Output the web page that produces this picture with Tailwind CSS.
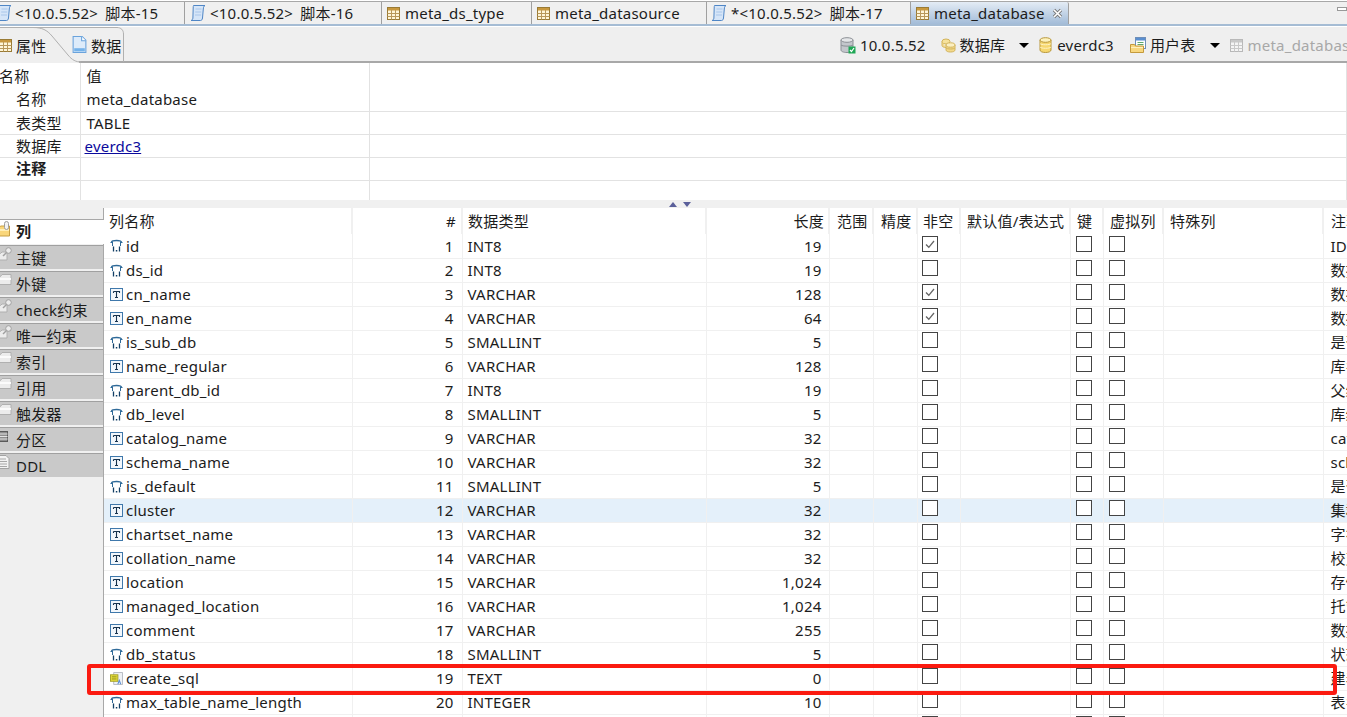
<!DOCTYPE html>
<html>
<head>
<meta charset="utf-8">
<script src="https://cdn.jsdelivr.net/npm/@tailwindcss/browser@4"></script>
</head>
<body class="m-0 w-[1347px] h-[717px] overflow-hidden bg-white text-[#1c1c1c] text-[15px] leading-[20px] tracking-[0.22px] font-['Noto_Sans','Noto_Sans_CJK_SC',sans-serif] relative">
<svg class="absolute w-0 h-0">
  <defs>
    <symbol id="script" viewBox="0 0 16 18"><path d="M3.500 1.500h11.500c-1.200.6-1.500 1.500-1.700 3.500L12.500 14c-.2 1.500-.8 2.500-2 2.500H1c1.200-.5 1.800-1.200 1.900-2.500L3.200 4C3.300 2.800 3.200 2 3.500 1.500z" fill="#d5e5f8" stroke="#4f86c6"/><path d="M5.500 5h6M5.200 8h6M5 11h6" stroke="#a9c6ea"/></symbol>
    <symbol id="tbl" viewBox="0 0 13 13"><rect x=".5" y=".5" width="12" height="12" fill="#fff6d8" stroke="#9a7b35"/><rect x="1" y="1" width="11" height="2.500" fill="#c9993e"/><path d="M.5 6.500h12M.5 9.500h12M4.500 3v9.500M8.500 3v9.500" stroke="#b9985a"/></symbol>
    <symbol id="tblgrey" viewBox="0 0 13 13"><rect x=".5" y=".5" width="12" height="12" fill="#f4f4f4" stroke="#b8b8b8"/><rect x="1" y="1" width="11" height="2.500" fill="#c8c8c8"/><path d="M.5 6.500h12M.5 9.500h12M4.500 3v9.500M8.500 3v9.500" stroke="#c8c8c8"/></symbol>
    <symbol id="num" viewBox="0 0 13 13"><path d="M1.500 3.500C1.500 2 3 1.500 6.500 1.500s5 .5 5 2" fill="none" stroke="#2f6a99" stroke-width="1.300"/><path d="M.5 3.500h2.500M10 3.500h2.500M2.500 3.500V7M10.500 3.500V7" stroke="#2f6a99"/><path d="M3.500 7.500v5M9.500 7.500v5" stroke="#123f66" stroke-width="1.300"/><rect x="5.800" y="11" width="1.500" height="1.500" fill="#123f66"/></symbol>
    <symbol id="txt" viewBox="0 0 13 13"><rect x=".5" y=".5" width="12" height="12" fill="#f2f7fc" stroke="#3f78ab"/><path d="M3.500 3.500h6v1.500M3.500 3.500V5M6.500 3.500v6M5 9.500h3" fill="none" stroke="#16324e" stroke-width="1.100"/></symbol>
    <symbol id="dbcheck" viewBox="0 0 16 17"><path d="M1 3v10c0 1.500 2.500 2.500 6 2.500s6-1 6-2.500V3z" fill="#c3c7cc" stroke="#8b8f95"/><ellipse cx="7" cy="3" rx="6" ry="2.300" fill="#e4e6e8" stroke="#8b8f95"/><path d="M1 8c1 1.500 11 1.500 12 0" fill="none" stroke="#8b8f95"/><rect x="8.500" y="9.500" width="7" height="7" fill="#1fa755"/><path d="M10 13l1.500 1.500 2.500-3.500" fill="none" stroke="#fff" stroke-width="1.200"/></symbol>
    <symbol id="dbs" viewBox="0 0 15 15"><ellipse cx="5" cy="3.500" rx="4" ry="2.500" fill="#f6e29c" stroke="#d3b45b"/><path d="M1 3.500v4c0 1.300 2 2 4 2" fill="#f3dc92" stroke="#d3b45b"/><path d="M5 7v5c0 1.300 2 2 4.500 2s4.500-.7 4.500-2V7z" fill="#f3d98a" stroke="#d3b45b"/><ellipse cx="9.500" cy="7" rx="4.500" ry="2.200" fill="#fbefc2" stroke="#d3b45b"/><path d="M5 10c1 1.300 8 1.300 9 0" fill="none" stroke="#d3b45b"/></symbol>
    <symbol id="db" viewBox="0 0 13 16"><path d="M1 3v10c0 1.500 2.300 2.500 5.500 2.500S12 14.500 12 13V3z" fill="#f6d76f" stroke="#b8973a"/><ellipse cx="6.500" cy="3" rx="5.500" ry="2.300" fill="#fdf2bd" stroke="#b8973a"/><path d="M1 6.500c1 1.700 10 1.700 11 0M1 10c1 1.700 10 1.700 11 0" fill="none" stroke="#fff3c4"/></symbol>
    <symbol id="usertbl" viewBox="0 0 16 16"><rect x="5.500" y=".5" width="10" height="11" fill="#fff" stroke="#6f8fb8"/><rect x="6" y="1" width="9" height="2.500" fill="#5a8fd0"/><path d="M7.500 5.500h6M7.500 7.500h6" stroke="#5fa86a"/><path d="M.5 7.500h4l1 1.500h8v6.500H.5z" fill="#f8d77e" stroke="#c49a3c"/><path d="M1 10.500h12" stroke="#fff0bd"/></symbol>
    <symbol id="doc" viewBox="0 0 14 16"><path d="M1 .5h8.500L13 4v11.500H1z" fill="#ddebfa" stroke="#6aa3dc"/><path d="M9 .5V4.500H13" fill="#fff" stroke="#6aa3dc"/><rect x="2" y="11.500" width="10" height="3" fill="#74b2ea"/></symbol>
    <symbol id="folder" viewBox="0 0 17 14"><path d="M.5 3.500h5l1.500-2h9v10H.5z" fill="#ececec" stroke="#b0b0b0"/><path d="M1 6h15" stroke="#fbfbfb" stroke-width="2"/></symbol>
    <symbol id="folderkey" viewBox="0 0 17 14"><path d="M.5 6.500h5l1.500-1.500h5v8H.5z" fill="#ececec" stroke="#b0b0b0"/><circle cx="13.500" cy="3.500" r="2.800" fill="#ececec" stroke="#a0a0a0"/><path d="M11.500 5.500L8 9" stroke="#a0a0a0" stroke-width="1.500"/></symbol>
    <symbol id="folderact" viewBox="0 0 17 16"><path d="M.5 6.500h5l1-1.500h9v10H.5z" fill="#f9d67a" stroke="#c79f43"/><path d="M1 9h14" stroke="#ffeeb5" stroke-width="2"/><rect x="10.500" y=".5" width="4" height="8" rx="2" fill="#f2f2f2" stroke="#9c9c9c"/></symbol>
    <symbol id="sqlcol" viewBox="0 0 14 14"><path d="M4 .5h9.500v13H4z" fill="#eef1f5" stroke="#b3b8c0"/><rect x=".5" y="3" width="8" height="7" fill="#e6df3a" stroke="#a4a02a"/><path d="M2 5.200h5M2 7.500h5" stroke="#8c8a1f"/><path d="M8.500 13l1.500-4 1.500 4" stroke="#5c8fd6" fill="none" stroke-width="1.200"/></symbol>
    <symbol id="partition" viewBox="0 0 17 14"><rect x=".5" y="2.500" width="12" height="10" fill="#8d8d8d" stroke="#5a5a5a"/><path d="M.5 5h12M.5 7.500h12M.5 10h12" stroke="#e3e3e3"/></symbol>
    <symbol id="ddl" viewBox="0 0 14 14"><path d="M.5 .5h9l3 3v10H.5z" fill="#f3f3f3" stroke="#a3a3a3"/><path d="M2.500 4h7M2.500 6.500h8M2.500 9h8M2.500 11.500h8" stroke="#a8a8a8"/></symbol>
    <symbol id="tick" viewBox="0 0 14 14"><path d="M3 7.500l2.800 2.800L11 4" fill="none" stroke="#666" stroke-width="1.300"/></symbol>
  </defs>
</svg>

<!-- editor tabs -->
<div class="h-[23px] mt-px bg-[#f0f0f0] border-t border-t-[#a8a8a8] flex whitespace-nowrap overflow-hidden box-border">
  <div class="w-[185px] shrink-0 flex items-center border-r border-[#a0a0a0]"><svg class="w-[16px] h-[18px] ml-[-4px] mr-[3px] shrink-0"><use href="#script"/></svg><span class="[word-spacing:3px]">&lt;10.0.5.52&gt; 脚本-15</span></div>
  <div class="w-[197px] shrink-0 flex items-center border-r border-[#a0a0a0] pl-[5px]"><svg class="w-[16px] h-[18px] mr-[4px] shrink-0"><use href="#script"/></svg><span class="[word-spacing:3px]">&lt;10.0.5.52&gt; 脚本-16</span></div>
  <div class="w-[150px] shrink-0 flex items-center border-r border-[#a0a0a0] pl-[5px]"><svg class="w-[13px] h-[13px] mr-[5px] shrink-0"><use href="#tbl"/></svg>meta_ds_type</div>
  <div class="w-[175px] shrink-0 flex items-center border-r border-[#a0a0a0] pl-[5px]"><svg class="w-[13px] h-[13px] mr-[5px] shrink-0"><use href="#tbl"/></svg>meta_datasource</div>
  <div class="w-[204px] shrink-0 flex items-center border-r border-[#a0a0a0] pl-[4px]"><svg class="w-[16px] h-[18px] mr-[4px] shrink-0"><use href="#script"/></svg><span class="[word-spacing:3px]">*&lt;10.0.5.52&gt; 脚本-17</span></div>
  <div class="w-[158px] shrink-0 flex items-center border-r border-[#a0a0a0] pl-[5px] bg-linear-to-b from-[#e4ecf5] to-[#a3bcd8] rounded-tr-[2px]"><svg class="w-[13px] h-[13px] mr-[5px] shrink-0"><use href="#tbl"/></svg>meta_database<svg class="w-[11px] h-[11px] ml-[7px] shrink-0" viewBox="0 0 11 11"><path d="M2 2l7 7M9 2l-7 7" stroke="#777" stroke-width="3.200"/><path d="M2 2l7 7M9 2l-7 7" stroke="#fff" stroke-width="1.600"/></svg></div>
  <div class="flex-1 relative"><span class="absolute right-0 top-[5px] w-[10px] h-[4px] border border-[#999] bg-white"></span></div>
</div>
<div class="h-[2px] bg-[#a5bcd4]"></div>

<!-- toolbar -->
<div class="h-[36px] bg-[#efefef] mt-px flex items-center whitespace-nowrap overflow-hidden relative border-b-[2px] border-b-[#a8a8a8] box-border">
  <div class="w-[125px] shrink-0 relative h-full">
    <svg class="w-[13px] h-[13px] absolute left-[-1px] top-[12px]"><use href="#tbl"/></svg><span class="absolute left-[16px] top-[9px]">属性</span>
    <svg class="w-[15px] h-[17px] absolute left-[72px] top-[9px]"><use href="#doc"/></svg><span class="absolute left-[91px] top-[9px]">数据</span>
  </div>
  <div class="flex items-center ml-[715px] mt-[2px]">
    <svg class="w-[16px] h-[17px] mr-[4px] shrink-0"><use href="#dbcheck"/></svg><span>10.0.5.52</span>
    <svg class="w-[15px] h-[15px] ml-[15px] mr-[4px] shrink-0"><use href="#dbs"/></svg><span>数据库</span>
    <span class="w-0 h-0 ml-[14px] border-x-[5px] border-x-transparent border-t-[5px] border-t-black shrink-0"></span>
    <svg class="w-[13px] h-[16px] ml-[10px] mr-[5px] shrink-0"><use href="#db"/></svg><span>everdc3</span>
    <svg class="w-[16px] h-[16px] ml-[16px] mr-[4px] shrink-0"><use href="#usertbl"/></svg><span>用户表</span>
    <span class="w-0 h-0 ml-[14px] border-x-[5px] border-x-transparent border-t-[5px] border-t-black shrink-0"></span>
    <svg class="w-[13px] h-[13px] ml-[10px] mr-[5px] shrink-0"><use href="#tblgrey"/></svg><span class="text-[#a8a8a8]">meta_database</span>
  </div>
</div>
<svg class="absolute left-0 top-[27px] w-[130px] h-[36px]" viewBox="0 0 130 36"><rect x="0" y="34" width="79" height="2" fill="#efefef"/><path d="M0 .5H33C42 .5 47 3 52 9L68 28C72 33 76 35 81 35" fill="none" stroke="#b0b0b0"/><path d="M33 .5H117C121 .5 123.500 3 123.500 7V35" fill="none" stroke="#b0b0b0"/></svg>

<!-- properties -->
<div class="h-[137px] overflow-hidden">
<table class="table-fixed border-collapse w-full [&_td]:p-0 [&_td]:border-r [&_td]:border-[#e2e2e2] [&_td]:align-middle">
  <colgroup><col class="w-[80px]"><col class="w-[289px]"><col></colgroup>
  <tr class="h-[25px]"><td><span class="ml-[-1px]">名称</span></td><td><span class="ml-[6px]">值</span></td><td></td></tr>
  <tr class="h-[23px] border-b border-[#e2e2e2]"><td><span class="ml-[16px]">名称</span></td><td><span class="ml-[6px]">meta_database</span></td><td></td></tr>
  <tr class="h-[23px] border-b border-[#e2e2e2]"><td><span class="ml-[16px]">表类型</span></td><td><span class="ml-[6px]">TABLE</span></td><td></td></tr>
  <tr class="h-[23px] border-b border-[#e2e2e2]"><td><span class="ml-[16px]">数据库</span></td><td><a class="ml-[4px] underline text-[#0a0a9c]">everdc3</a></td><td></td></tr>
  <tr class="h-[23px] border-b border-[#e2e2e2]"><td><span class="ml-[16px] font-bold relative -top-px">注释</span></td><td></td><td></td></tr>
  <tr class="h-[20px]"><td></td><td></td><td></td></tr>
</table>
</div>

<!-- splitter -->
<div class="h-[8px] bg-[#f0f0f0] flex items-start gap-[6px] pl-[669px] pt-[2px] box-border">
  <span class="w-0 h-0 border-x-[4px] border-x-transparent border-b-[5px] border-b-[#5a5f9a]"></span>
  <span class="w-0 h-0 border-x-[4px] border-x-transparent border-t-[5px] border-t-[#5a5f9a]"></span>
</div>

<!-- lower -->
<div class="flex h-[509px]">
  <div class="w-[104px] shrink-0 bg-[#f0f0f0] border-r border-[#a8a8a8] pt-[11px] box-border">
    <div class="h-[25px] bg-white border-t border-[#a8a8a8] -mr-px relative flex items-center font-bold pb-[2px] box-border"><svg class="w-[17px] h-[16px] absolute left-[-6px] top-[1px]"><use href="#folderact"/></svg><span class="ml-[16px]">列</span></div>
    <div class="flex flex-col gap-[2px] mt-[1px] [&>div]:h-[24px] [&>div]:box-border [&>div]:bg-[#c9c9c9] [&>div]:border-t [&>div]:border-[#a0a0a0] [&>div]:flex [&>div]:items-center [&>div]:relative [&_span]:ml-[16px] [&_span]:whitespace-nowrap [&_svg]:absolute [&_svg]:left-[-5px] [&_svg]:top-[1px] [&_svg]:w-[17px] [&_svg]:h-[14px]">
      <div><svg><use href="#folderkey"/></svg><span>主键</span></div>
      <div><svg><use href="#folder"/></svg><span>外键</span></div>
      <div><svg><use href="#folderkey"/></svg><span>check约束</span></div>
      <div><svg><use href="#folderkey"/></svg><span>唯一约束</span></div>
      <div><svg><use href="#folder"/></svg><span>索引</span></div>
      <div><svg><use href="#folder"/></svg><span>引用</span></div>
      <div><svg><use href="#folder"/></svg><span>触发器</span></div>
      <div><svg><use href="#partition"/></svg><span>分区</span></div>
      <div><svg><use href="#ddl"/></svg><span>DDL</span></div>
    </div>
  </div>
  <div class="flex-1 min-w-0 overflow-hidden">
  <table class="table-fixed border-collapse w-[1300px] whitespace-nowrap [&_td]:p-0 [&_td]:overflow-hidden [&_th]:p-0 [&_th]:font-normal [&_th]:text-left [&_td]:border-r [&_td]:border-[#f0f0f0] [&_th]:border-r-2 [&_th]:border-[#f0f0f0] [&_tbody_tr]:h-[24px] [&_tbody_tr]:border-b [&_tbody_tr]:border-[#f0f0f0] [&_td:nth-child(1)_span]:ml-[4px] [&_td:nth-child(1)_span]:flex [&_td:nth-child(1)_span]:items-center [&_td:nth-child(1)_svg]:w-[13px] [&_td:nth-child(1)_svg]:h-[13px] [&_td:nth-child(1)_svg]:mx-[2px] [&_td:nth-child(1)_svg]:mr-[3px] [&_td:nth-child(2)]:text-right [&_td:nth-child(2)]:pr-[8px]! [&_td:nth-child(4)]:text-right [&_td:nth-child(4)]:pr-[7px]! [&_td:nth-child(3)]:pl-[5px]! [&_td:nth-child(12)]:pl-[7px]! [&_i]:block [&_i]:w-[16px] [&_i]:h-[16px] [&_i]:border [&_i]:border-[#444] [&_i]:bg-white [&_i]:-mt-[4px] [&_i]:ml-[5px] [&_td:nth-child(7)_i]:ml-[4px]! [&_i_svg]:w-[14px] [&_i_svg]:h-[14px]">
    <colgroup><col class="w-[248px]"><col class="w-[110px]"><col class="w-[244px]"><col class="w-[123px]"><col class="w-[44px]"><col class="w-[44px]"><col class="w-[43px]"><col class="w-[110px]"><col class="w-[33px]"><col class="w-[60px]"><col class="w-[160px]"><col class="w-[81px]"></colgroup>
    <thead><tr class="h-[26px]">
      <th class="pl-[5px]!">列名称</th><th class="text-right! pr-[5px]!">#</th><th class="pl-[5px]!">数据类型</th><th class="text-right! pr-[4px]!">长度</th><th class="pl-[7px]!">范围</th><th class="pl-[7px]!">精度</th><th class="pl-[5px]!">非空</th><th class="pl-[6px]!">默认值/表达式</th><th class="pl-[6px]!">键</th><th class="pl-[6px]!">虚拟列</th><th class="pl-[6px]!">特殊列</th><th class="pl-[7px]!">注释</th>
    </tr></thead>
    <tbody>
      <tr><td><span><svg><use href="#num"/></svg>id</span></td><td>1</td><td>INT8</td><td>19</td><td></td><td></td><td><i><svg><use href="#tick"/></svg></i></td><td></td><td><i></i></td><td><i></i></td><td></td><td>ID</td></tr>
      <tr><td><span><svg><use href="#num"/></svg>ds_id</span></td><td>2</td><td>INT8</td><td>19</td><td></td><td></td><td><i></i></td><td></td><td><i></i></td><td><i></i></td><td></td><td>数据源</td></tr>
      <tr><td><span><svg><use href="#txt"/></svg>cn_name</span></td><td>3</td><td>VARCHAR</td><td>128</td><td></td><td></td><td><i><svg><use href="#tick"/></svg></i></td><td></td><td><i></i></td><td><i></i></td><td></td><td>数据库</td></tr>
      <tr><td><span><svg><use href="#txt"/></svg>en_name</span></td><td>4</td><td>VARCHAR</td><td>64</td><td></td><td></td><td><i><svg><use href="#tick"/></svg></i></td><td></td><td><i></i></td><td><i></i></td><td></td><td>数据库</td></tr>
      <tr><td><span><svg><use href="#num"/></svg>is_sub_db</span></td><td>5</td><td>SMALLINT</td><td>5</td><td></td><td></td><td><i></i></td><td></td><td><i></i></td><td><i></i></td><td></td><td>是否</td></tr>
      <tr><td><span><svg><use href="#txt"/></svg>name_regular</span></td><td>6</td><td>VARCHAR</td><td>128</td><td></td><td></td><td><i></i></td><td></td><td><i></i></td><td><i></i></td><td></td><td>库名</td></tr>
      <tr><td><span><svg><use href="#num"/></svg>parent_db_id</span></td><td>7</td><td>INT8</td><td>19</td><td></td><td></td><td><i></i></td><td></td><td><i></i></td><td><i></i></td><td></td><td>父级</td></tr>
      <tr><td><span><svg><use href="#num"/></svg>db_level</span></td><td>8</td><td>SMALLINT</td><td>5</td><td></td><td></td><td><i></i></td><td></td><td><i></i></td><td><i></i></td><td></td><td>库级</td></tr>
      <tr><td><span><svg><use href="#txt"/></svg>catalog_name</span></td><td>9</td><td>VARCHAR</td><td>32</td><td></td><td></td><td><i></i></td><td></td><td><i></i></td><td><i></i></td><td></td><td>catalog</td></tr>
      <tr><td><span><svg><use href="#txt"/></svg>schema_name</span></td><td>10</td><td>VARCHAR</td><td>32</td><td></td><td></td><td><i></i></td><td></td><td><i></i></td><td><i></i></td><td></td><td>schema</td></tr>
      <tr><td><span><svg><use href="#num"/></svg>is_default</span></td><td>11</td><td>SMALLINT</td><td>5</td><td></td><td></td><td><i></i></td><td></td><td><i></i></td><td><i></i></td><td></td><td>是否</td></tr>
      <tr class="bg-[#e4f0fa]"><td><span><svg><use href="#txt"/></svg>cluster</span></td><td>12</td><td>VARCHAR</td><td>32</td><td></td><td></td><td><i></i></td><td></td><td><i></i></td><td><i></i></td><td></td><td>集群</td></tr>
      <tr><td><span><svg><use href="#txt"/></svg>chartset_name</span></td><td>13</td><td>VARCHAR</td><td>32</td><td></td><td></td><td><i></i></td><td></td><td><i></i></td><td><i></i></td><td></td><td>字符</td></tr>
      <tr><td><span><svg><use href="#txt"/></svg>collation_name</span></td><td>14</td><td>VARCHAR</td><td>32</td><td></td><td></td><td><i></i></td><td></td><td><i></i></td><td><i></i></td><td></td><td>校对</td></tr>
      <tr><td><span><svg><use href="#txt"/></svg>location</span></td><td>15</td><td>VARCHAR</td><td>1,024</td><td></td><td></td><td><i></i></td><td></td><td><i></i></td><td><i></i></td><td></td><td>存储</td></tr>
      <tr><td><span><svg><use href="#txt"/></svg>managed_location</span></td><td>16</td><td>VARCHAR</td><td>1,024</td><td></td><td></td><td><i></i></td><td></td><td><i></i></td><td><i></i></td><td></td><td>托管</td></tr>
      <tr><td><span><svg><use href="#txt"/></svg>comment</span></td><td>17</td><td>VARCHAR</td><td>255</td><td></td><td></td><td><i></i></td><td></td><td><i></i></td><td><i></i></td><td></td><td>数据</td></tr>
      <tr><td><span><svg><use href="#num"/></svg>db_status</span></td><td>18</td><td>SMALLINT</td><td>5</td><td></td><td></td><td><i></i></td><td></td><td><i></i></td><td><i></i></td><td></td><td>状态</td></tr>
      <tr><td><span><svg><use href="#sqlcol"/></svg>create_sql</span></td><td>19</td><td>TEXT</td><td>0</td><td></td><td></td><td><i></i></td><td></td><td><i></i></td><td><i></i></td><td></td><td>建表</td></tr>
      <tr><td><span><svg><use href="#num"/></svg>max_table_name_length</span></td><td>20</td><td>INTEGER</td><td>10</td><td></td><td></td><td><i></i></td><td></td><td><i></i></td><td><i></i></td><td></td><td>表名</td></tr>
      <tr><td></td><td></td><td></td><td></td><td></td><td></td><td><i></i></td><td></td><td><i></i></td><td><i></i></td><td></td><td></td></tr>
    </tbody>
  </table>
  </div>
</div>

<!-- annotation -->
<div class="absolute left-[87px] top-[664px] w-[1250px] h-[31px] border-[4px] border-[#fb1a10] rounded-[3px]"></div>
</body>
</html>
